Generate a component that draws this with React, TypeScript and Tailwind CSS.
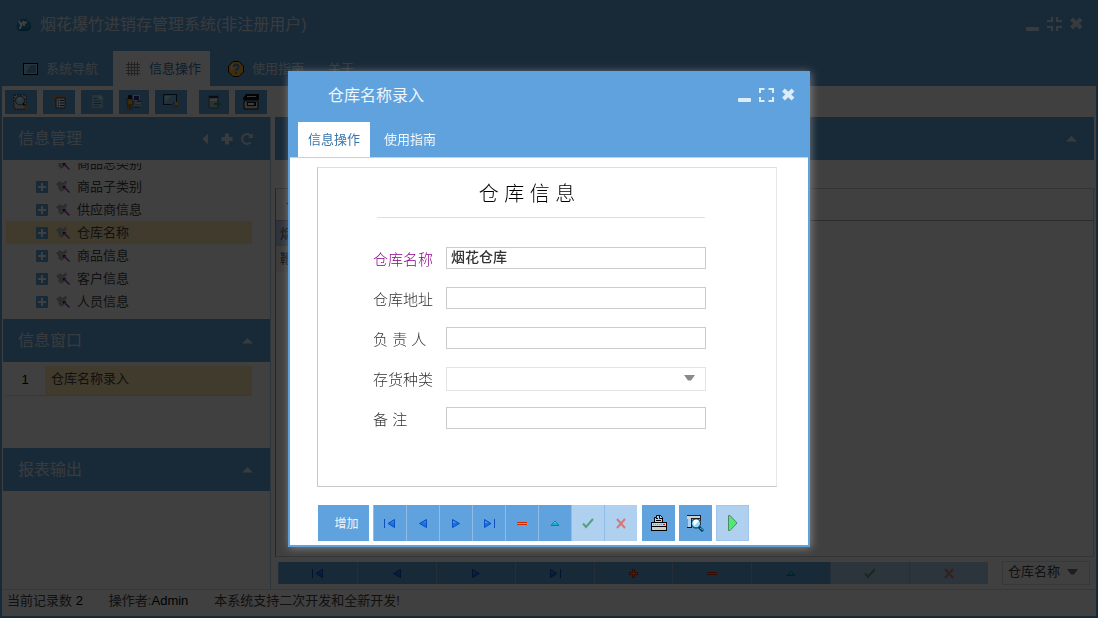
import { useState, type ReactNode } from "react";
import { FaCaretLeft, FaRedoAlt } from "react-icons/fa";

const treeItems = ["商品总类别", "商品子类别", "供应商信息", "仓库名称", "商品信息", "客户信息", "人员信息"];
const gridRows = ["烟花仓库", "鞭炮仓库"];

/* ---------- small glyphs ---------- */

function CaretUp() {
  return (
    <svg width="11" height="6" viewBox="0 0 11 6" fill="currentColor" aria-hidden="true">
      <path d="M5.5 0 11 5.5H0Z" />
    </svg>
  );
}

function CaretDown() {
  return (
    <svg width="11" height="6" viewBox="0 0 11 6" fill="currentColor" aria-hidden="true">
      <path d="M0 0H11L7 5.5H4Z" />
    </svg>
  );
}

function PlusIcon() {
  return (
    <svg width="12" height="12" viewBox="0 0 12 12" fill="currentColor" aria-hidden="true">
      <path d="M4 .5h4V4h3.500v4H8v3.500H4V8H.5V4H4Z" />
    </svg>
  );
}

function MinimizeIcon() {
  return (
    <svg width="15" height="15" viewBox="0 0 15 15" fill="currentColor" aria-hidden="true">
      <rect x="1" y="10" width="13" height="4" rx="1" />
    </svg>
  );
}

function ExpandIcon() {
  return (
    <svg width="15" height="15" viewBox="0 0 15 15" fill="none" stroke="currentColor" strokeWidth="2" aria-hidden="true">
      <path d="M1 5V1H5.500M9.500 1H14V5M14 9V13H9.500M5.500 13H1V9" />
    </svg>
  );
}

function CompressIcon() {
  return (
    <svg width="15" height="15" viewBox="0 0 15 15" fill="none" stroke="currentColor" strokeWidth="2" aria-hidden="true">
      <path d="M0 4H5V0M10 0V4H15M15 10H10V14M5 14V10H0" />
    </svg>
  );
}

function CloseIcon() {
  return (
    <svg width="15" height="15" viewBox="0 0 15 15" fill="none" stroke="currentColor" strokeWidth="4" aria-hidden="true">
      <path d="M2.500 2 12 11M12 2 2.500 11" />
    </svg>
  );
}

/* ---------- application icons ---------- */

function LogoIcon() {
  return (
    <svg width="16" height="14" viewBox="0 0 16 14" aria-hidden="true">
      <path d="M1 8a3 3 0 0 1 2-4 5 5 0 0 1 9-1 4 4 0 0 1 3 4c1 3-1 5-4 5H4C1 12 0 10 1 8Z" fill="#1c86b4" />
      <path d="M2 9c3 3 9 3 13 0-1 3-3 4-5 4H4c-2 0-2-2-2-4Z" fill="#0c6a9c" />
      <path d="m3 3 2 4 3-4M5.500 7l-2 4M8 4.500h3M8 4v4" fill="none" stroke="#fff" strokeWidth="2" />
    </svg>
  );
}

function ScreenIcon() {
  return (
    <svg width="15" height="12" viewBox="0 0 15 12" aria-hidden="true">
      <rect width="15" height="12" fill="#000" />
      <rect x="1" y="1" width="13" height="10" fill="#a9d4ee" />
      <rect x="2" y="2" width="11" height="8" fill="#4c9ad0" />
      <path d="M2 2h6L3 10H2z" fill="#8cc6ea" />
    </svg>
  );
}

function GridIcon() {
  return (
    <svg width="14" height="14" viewBox="0 0 14 14" fill="none" stroke="#8a8a8a" aria-hidden="true">
      <path d="M2.500 0v14M5.500 0v14M8.500 0v14M11.500 0v14M0 2.500h14M0 5.500h14M0 8.500h14M0 11.500h14" />
    </svg>
  );
}

function HelpIcon() {
  return (
    <svg width="16" height="16" viewBox="0 0 16 16" aria-hidden="true">
      <path d="M5 .5h6L15.500 5v6L11 15.500H5L.5 11V5Z" fill="#ffb52e" stroke="#1c1000" />
      <path d="M4 3h5L3 10V5Z" fill="#ffe08a" />
      <path d="M5.500 6c0-3 5-3 5 0 0 2-2.500 2-2.500 4" fill="none" stroke="#4a86c4" strokeWidth="2" />
      <rect x="7" y="11" width="2" height="2" fill="#4a86c4" />
    </svg>
  );
}

function PreviewIcon() {
  return (
    <svg width="16" height="16" viewBox="0 0 16 16" aria-hidden="true">
      <path d="M1 1h12v14H1z" fill="#d5d9d4" stroke="#333" strokeDasharray="2 1" />
      <circle cx="7" cy="6.500" r="4.500" fill="#a4e2f6" stroke="#2d5468" />
      <path d="M5 4h4L5 8z" fill="#e8fbff" />
      <path d="m11 11 3.500 3.500" stroke="#f0823a" strokeWidth="3" />
      <path d="m10 9.500 1.500 1.500" stroke="#111" strokeWidth="2" />
    </svg>
  );
}

function ListIcon() {
  return (
    <svg width="14" height="14" viewBox="0 0 14 14" aria-hidden="true">
      <path d="M0 1h14v2H0z" fill="#b98a7d" />
      <path d="M1 3h3v10H1z" fill="#8b9aa4" />
      <path d="M4 3h9v10H4z" fill="#eef3f6" stroke="#3f4a52" />
      <path d="M6 5.500h1M8 5.500h4M6 8h1M8 8h4M6 10.500h1M8 10.500h4" stroke="#2b3a47" />
    </svg>
  );
}

function PageIcon() {
  return (
    <svg width="13" height="15" viewBox="0 0 13 15" aria-hidden="true">
      <path d="M.5.5h8l4 4v10H.5Z" fill="#9ed0ea" stroke="#6ba5c8" />
      <path d="M8.500.5v4h4Z" fill="#e4f5fd" />
      <path d="M2.500 4.500h4M2.500 7h8M2.500 9.500h8M2.500 12h6" stroke="#3c7da8" />
    </svg>
  );
}

function OperatorIcon() {
  return (
    <svg width="16" height="16" viewBox="0 0 16 16" aria-hidden="true">
      <path d="M7 1h7v6H7z" fill="#d5dfe8" />
      <path d="M8 2h5v4H8z" fill="#2b2f9e" />
      <path d="M9 8h6v2H9zM8 11h7v2H8z" fill="#c3cbd2" />
      <path d="M8 13h6M11 7h4" stroke="#333" />
      <rect x="2" y="1" width="4" height="4" rx="1" fill="#1a1a1a" />
      <path d="M1 5h6v5H6v6H2v-6H1Z" fill="#e6a64a" stroke="#3e2a0c" strokeWidth=".6" />
      <path d="M4 10v5" stroke="#3e2a0c" />
    </svg>
  );
}

function ScreenUserIcon() {
  return (
    <svg width="16" height="15" viewBox="0 0 16 15" aria-hidden="true">
      <rect x=".5" y=".5" width="13" height="10" fill="#79bbe6" stroke="#1b2a36" />
      <path d="M2 2h6L2 8z" fill="#b6e0f7" />
      <circle cx="12" cy="11" r="3.500" fill="#d965b0" />
      <path d="M12 8a3 3 0 0 1 3 3h-3Z" fill="#f2c53c" />
      <path d="M12 11h3a3 3 0 0 1-5 2Z" fill="#49b356" />
      <path d="M9 11a3 3 0 0 1 3-3v3Z" fill="#4b8be0" />
    </svg>
  );
}

function ExportIcon() {
  return (
    <svg width="13" height="14" viewBox="0 0 13 14" aria-hidden="true">
      <path d="M1 1h9v12H1z" fill="#b9c3cb" stroke="#56626b" />
      <path d="M1 1h9v2H1z" fill="#2f3b44" />
      <path d="M2 4h7v2H2z" fill="#eef3f6" />
      <path d="M6 8h3V5.500L13 9l-4 3.500V10H6Z" fill="#2bab3d" />
    </svg>
  );
}

function DeviceIcon() {
  return (
    <svg width="16" height="16" viewBox="0 0 16 16" aria-hidden="true">
      <path d="M3 0h13v6H0V4Z" fill="#111" />
      <path d="M4 2.500h9" stroke="#e8e8e8" />
      <path d="M1 7h14v8H1z" fill="#d8d8d8" stroke="#111" />
      <path d="M4 8h9v4H4z" fill="#111" />
      <path d="M5 10h6" stroke="#f2f2f2" strokeWidth="2" />
    </svg>
  );
}

function ToolIcon() {
  return (
    <svg width="14" height="14" viewBox="0 0 14 14" aria-hidden="true">
      <path d="m0 4 4-3 3 2 3-3 1 3-2 3 2 1-3 3-3 2-3-3 1-2Z" fill="#bcbcbc" />
      <path d="m1 5 3-3M3 9l3-3M7 4l3-3M2 7l4-4M5 11l2-2" stroke="#888" strokeDasharray="1 1" />
      <path d="m7 6 3 0-3 3Z" fill="#2c0c3c" />
      <path d="m8 7 5.500 5.500" stroke="#9a2fc4" strokeWidth="1.500" />
    </svg>
  );
}

function ExpandBox() {
  return (
    <svg width="12" height="12" viewBox="0 0 12 12" aria-hidden="true">
      <rect width="12" height="12" rx="1" fill="#5fa2dd" />
      <path d="M6 2v8M2 6h8" stroke="#fff" strokeWidth="2" />
    </svg>
  );
}

function PrinterIcon() {
  return (
    <svg width="16" height="16" viewBox="0 0 16 16" aria-hidden="true">
      <path d="M3.500 8V2.500h2V.5h4l2 2V8" fill="#a9d3f3" stroke="#000" />
      <path d="M8.500.5v3h3M5 3.500h2M5 5.500h5" fill="none" stroke="#000" />
      <rect x=".5" y="7.500" width="15" height="4" fill="#b9d3ee" stroke="#000" />
      <path d="M2 9.500h10" stroke="#7796ba" strokeDasharray="1 1" />
      <rect x="12" y="9" width="2" height="1" fill="#e01010" />
      <rect x=".5" y="11.500" width="15" height="4" fill="#cfcfc8" stroke="#000" />
    </svg>
  );
}

function SearchPageIcon() {
  return (
    <svg width="17" height="17" viewBox="0 0 17 17" aria-hidden="true">
      <path d="M0 1h14v3H0z" fill="#c7d2da" />
      <path d="M0 .5h14M4 3.500h10M4.500 3v9M13.500 1v5" stroke="#222" />
      <path d="M1 4h3v8H1z" fill="#a9d3f3" />
      <path d="M0 12.500h5" stroke="#111" />
      <circle cx="9" cy="8.500" r="4.500" fill="#8edcff" stroke="#101820" />
      <path d="M6 7c1-3 4-3 6-1l-5 5Z" fill="#f4fdff" />
      <path d="m12 12 4 4" stroke="#0a3550" strokeWidth="3" />
      <path d="m13 13 3 2" stroke="#35c3ee" strokeWidth="1" />
    </svg>
  );
}

function RunIcon() {
  return (
    <svg width="11" height="16" viewBox="0 0 11 16" aria-hidden="true">
      <path d="M1.500.5H3l7 7.500-7 7.500H1.500Z" fill="#52e873" stroke="#4a8a66" />
    </svg>
  );
}

type NavKind = "first" | "prev" | "next" | "last" | "plus" | "minus" | "edit" | "post" | "cancel";

const navLabels: Record<NavKind, string> = {
  first: "首记录",
  prev: "上一条",
  next: "下一条",
  last: "尾记录",
  plus: "增加",
  minus: "删除",
  edit: "编辑",
  post: "保存",
  cancel: "取消",
};

const navGlyphs: Record<NavKind, ReactNode> = {
  first: (
    <>
      <path d="M0 2h1v9H0z" fill="#0a4fc4" />
      <path d="M10.500 2.500v8L4 6.500Z" fill="#1673e6" stroke="#0a4fc4" />
      <path d="m7 6 3-2v1Z" fill="#4fa4fa" />
    </>
  ),
  prev: (
    <>
      <path d="M9.500 2.500v8l-7-4Z" fill="#1673e6" stroke="#0a4fc4" />
      <path d="m6 6 3-2v1Z" fill="#4fa4fa" />
    </>
  ),
  next: (
    <>
      <path d="M2.500 2.500v8l7-4Z" fill="#1673e6" stroke="#0a4fc4" />
      <path d="M3 4v2l3-.5Z" fill="#4fa4fa" />
    </>
  ),
  last: (
    <>
      <path d="M1.500 2.500v8L8 6.500Z" fill="#1673e6" stroke="#0a4fc4" />
      <path d="M2 4v2l3-.5Z" fill="#4fa4fa" />
      <path d="M11 2h1v9h-1z" fill="#0a4fc4" />
    </>
  ),
  plus: (
    <>
      <path d="M5 2h3v3h3v3H8v3H5V8H2V5h3Z" fill="#d42a00" />
      <path d="M6 3h1v7H6zM3 6h7v1H3z" fill="#ff8a30" />
    </>
  ),
  minus: (
    <>
      <path d="M1 5h10v3H1z" fill="#d42a00" />
      <path d="M1 6h10v1H1z" fill="#ff8a30" />
    </>
  ),
  edit: (
    <>
      <path d="M6 4 10 8.500H2Z" fill="#18b2cc" stroke="#07839c" />
      <path d="m6 5 1 1H5Z" fill="#9af0ff" />
    </>
  ),
  post: <path d="m1 6.500 3 3.500 7-8" fill="none" stroke="#55a083" strokeWidth="2" />,
  cancel: <path d="m2 2 8 9M10 2l-8 9" fill="none" stroke="#d4777a" strokeWidth="2" />,
};

function NavButton({ kind, className }: { kind: NavKind; className: string }) {
  const disabled = kind === "post" || kind === "cancel";
  return (
    <button
      type="button"
      aria-label={navLabels[kind]}
      disabled={disabled}
      className={`flex items-center justify-center border-l border-[#8fbde7] bg-[#5fa2dd] disabled:bg-[#afd0ee] ${className}`}
    >
      <svg width="12" height="12" viewBox="0 0 12 12" aria-hidden="true">
        {navGlyphs[kind]}
      </svg>
    </button>
  );
}

function ToolButton({ label, className = "w-8", children }: { label: string; className?: string; children: ReactNode }) {
  return (
    <button type="button" aria-label={label} className={`flex h-6 items-center justify-center bg-[#5fa2dd] ${className}`}>
      {children}
    </button>
  );
}

function PanelHeader({ title, children }: { title?: string; children: ReactNode }) {
  return (
    <div className="flex h-[43px] shrink-0 items-center justify-between bg-[#5fa2dd] pt-px pr-[17px] pl-[15px] text-white/80">
      <h2 className="text-base">{title}</h2>
      {children}
    </div>
  );
}

/* ---------- main window ---------- */

function MainWindow() {
  return (
    <div className="flex min-h-screen flex-col border-2 border-[#5fa2dd] bg-white text-[13px] text-[#444]">
      <header className="bg-[#5fa2dd] text-white/80">
        <div className="flex h-[49px] items-center justify-between pr-3 pb-1 pl-[14px]">
          <div className="flex items-center gap-2">
            <LogoIcon />
            <h1 className="text-base">烟花爆竹进销存管理系统(非注册用户)</h1>
          </div>
          <div className="flex gap-[7px]">
            <button type="button" aria-label="最小化"><MinimizeIcon /></button>
            <button type="button" aria-label="还原"><CompressIcon /></button>
            <button type="button" aria-label="关闭"><CloseIcon /></button>
          </div>
        </div>
        <nav className="flex h-[35px]">
          <a href="#nav" className="flex items-center gap-2 pr-[15px] pl-[21px]"><ScreenIcon />系统导航</a>
          <a href="#info" className="flex items-center gap-[9px] bg-white pr-[9px] pl-[13px] text-[#3a76ac]"><GridIcon />信息操作</a>
          <a href="#guide" className="flex items-center gap-2 px-[18px]"><HelpIcon />使用指南</a>
          <a href="#about" className="flex items-center px-[6px]">关于</a>
        </nav>
      </header>

      <div className="flex h-[31px] items-center gap-[6px] px-[3px]">
        <ToolButton label="查询"><PreviewIcon /></ToolButton>
        <ToolButton label="列表"><ListIcon /></ToolButton>
        <ToolButton label="文档"><PageIcon /></ToolButton>
        <ToolButton label="操作员" className="w-[30px]"><OperatorIcon /></ToolButton>
        <ToolButton label="界面"><ScreenUserIcon /></ToolButton>
        <ToolButton label="导出" className="ml-[6px] w-[30px]"><ExportIcon /></ToolButton>
        <ToolButton label="设备"><DeviceIcon /></ToolButton>
      </div>

      <div className="flex flex-1 gap-1 pr-[2px] pl-px">
        <aside className="flex w-[268px] flex-col border-r border-[#b5d3ee]">
          <PanelHeader title="信息管理">
            <div className="flex items-center gap-2">
              <button type="button" aria-label="折叠"><FaCaretLeft size={16} /></button>
              <button type="button" aria-label="添加"><PlusIcon /></button>
              <button type="button" aria-label="刷新"><FaRedoAlt size={12} /></button>
            </div>
          </PanelHeader>
          <div className="mt-[3px] mb-[6px] flex h-[150px] flex-col justify-end overflow-hidden">
            <ul className="shrink-0 pr-[18px] pl-[3px]">
              {treeItems.map((item, i) => (
                <li
                  key={item}
                  className={`flex h-[23px] items-center pl-[30px] ${item === "仓库名称" ? "bg-[#ffe9b0]" : ""}`}
                >
                  <span className="w-5">{i > 0 && <ExpandBox />}</span>
                  <span className="w-[21px]"><ToolIcon /></span>
                  {item}
                </li>
              ))}
            </ul>
          </div>
          <PanelHeader title="信息窗口"><CaretUp /></PanelHeader>
          <div className="h-[86px] pt-1 pr-[18px] pl-[2px]">
            <div className="flex h-[30px] border-b border-[#eee0c0]">
              <span className="w-10 pt-1 text-center text-black">1</span>
              <span className="flex-1 bg-[#ffe9b0] px-[6px] pt-[3px]">仓库名称录入</span>
            </div>
          </div>
          <PanelHeader title="报表输出"><CaretUp /></PanelHeader>
        </aside>

        <main className="flex min-w-0 flex-1 flex-col">
          <PanelHeader><CaretUp /></PanelHeader>
          <div className="mt-7 flex-1 border border-[#c8cdd4] border-l-[#999]">
            <table className="w-full text-left">
              <thead>
                <tr className="h-[31px] border-b border-[#aaa]"><th className="pl-[10px] font-normal">仓库名称</th></tr>
              </thead>
              <tbody>
                {gridRows.map((row, i) => (
                  <tr key={row} className="h-[26px]">
                    <td className={`w-[340px] pl-1 ${i === 0 ? "bg-[#b9ccf0]" : "bg-[#f0f0f0]"}`}>{row}</td>
                    <td />
                  </tr>
                ))}
              </tbody>
            </table>
          </div>
          <div className="flex items-center py-1 pr-1 pl-[3px]">
            <div className="grid h-[22px] flex-1 grid-cols-9">
              {(Object.keys(navLabels) as NavKind[]).map((kind) => (
                <NavButton key={kind} kind={kind} className="h-full" />
              ))}
            </div>
            <div className="relative ml-[14px] w-[88px]">
              <select aria-label="排序字段" className="h-6 w-full appearance-none border border-[#ddd] bg-white pr-7 pb-[2px] pl-[5px]">
                <option>仓库名称</option>
              </select>
              <span className="pointer-events-none absolute top-2 right-3 text-[#777]"><CaretDown /></span>
            </div>
          </div>
        </main>
      </div>

      <footer className="flex h-[27px] items-center gap-[26px] border-t border-[#ddd] px-[5px] pb-1">
        <span>当前记录数 <span className="text-black">2</span></span>
        <span>操作者:<span className="text-black">Admin</span></span>
        <span>本系统支持二次开发和全新开发!</span>
      </footer>
    </div>
  );
}

/* ---------- entry dialog ---------- */

const fieldClass = "w-[260px] border bg-white px-1 text-sm font-medium text-[#333] outline-none";

function Field({ id, label, required, children }: { id: string; label: string; required?: boolean; children: ReactNode }) {
  return (
    <div className="flex h-10 items-start">
      <label htmlFor={id} className={`w-[73px] text-[15px] leading-[26px] font-light ${required ? "text-[#8b008b]" : "text-[#333]"}`}>
        {label}
      </label>
      {children}
    </div>
  );
}

function EntryDialog() {
  const [form, setForm] = useState({ name: "烟花仓库", address: "", manager: "", kind: "", remark: "" });

  const update = (key: keyof typeof form) => (e: React.ChangeEvent<HTMLInputElement | HTMLSelectElement>) =>
    setForm({ ...form, [key]: e.target.value });

  const navButtons: NavKind[] = ["first", "prev", "next", "last", "minus", "edit", "post", "cancel"];

  return (
    <div
      role="dialog"
      aria-label="仓库名称录入"
      className="w-[522px] border-2 border-[#5fa2dd] bg-white shadow-[1px_1px_8px_rgba(200,200,200,0.5)]"
    >
      <header className="border-b border-[#b5d5f0] bg-[#5fa2dd] text-white/90">
        <div className="flex h-[49px] items-center justify-between pr-3 pb-1 pl-[38px]">
          <h2 className="text-base">仓库名称录入</h2>
          <div className="flex gap-[7px] text-white/80">
            <button type="button" aria-label="最小化"><MinimizeIcon /></button>
            <button type="button" aria-label="最大化"><ExpandIcon /></button>
            <button type="button" aria-label="关闭"><CloseIcon /></button>
          </div>
        </div>
        <nav className="flex h-[35px] gap-1 px-2 text-[13px]">
          <a href="#entry" className="flex items-center bg-white px-[10px] text-[#3a76ac]">信息操作</a>
          <a href="#help" className="flex items-center px-[10px]">使用指南</a>
        </nav>
      </header>

      <form className="px-[27px] pt-[9px] pb-1">
        <div className="mr-1 h-[320px] border border-[#c8c8c8] border-t-[#ddd] border-r-[#e8e8e8] px-[55px]">
          <h3 className="mr-4 ml-1 h-[50px] border-b border-[#cfe1f3] pt-3 pr-[28px] text-center text-xl font-light text-black">
            仓 库 信 息
          </h3>
          <div className="pt-[29px]">
            <Field id="name" label="仓库名称" required>
              <input id="name" value={form.name} onChange={update("name")} className={`${fieldClass} h-[22px] border-[#ccc] pb-1`} />
            </Field>
            <Field id="address" label="仓库地址">
              <input id="address" value={form.address} onChange={update("address")} className={`${fieldClass} h-[22px] border-[#ccc]`} />
            </Field>
            <Field id="manager" label="负 责 人">
              <input id="manager" value={form.manager} onChange={update("manager")} className={`${fieldClass} h-[22px] border-[#ccc]`} />
            </Field>
            <Field id="kind" label="存货种类">
              <div className="relative">
                <select id="kind" value={form.kind} onChange={update("kind")} className={`${fieldClass} h-6 appearance-none border-[#e4e4e4]`}>
                  <option value=""></option>
                </select>
                <span className="pointer-events-none absolute top-2 right-[11px] text-[#8a8a8a]"><CaretDown /></span>
              </div>
            </Field>
            <Field id="remark" label="备 注">
              <input id="remark" value={form.remark} onChange={update("remark")} className={`${fieldClass} h-[22px] border-[#ccc]`} />
            </Field>
          </div>
        </div>

        <div className="mt-[18px] ml-px flex h-9 gap-1">
          <button type="button" className="w-[51px] bg-[#5fa2dd] pt-[2px] pl-[6px] text-xs text-white/90">增加</button>
          <div className="mr-px flex">
            {navButtons.map((kind) => (
              <NavButton key={kind} kind={kind} className="w-[33px]" />
            ))}
          </div>
          <button type="button" aria-label="打印" className="flex w-[33px] items-center justify-center bg-[#5fa2dd]"><PrinterIcon /></button>
          <button type="button" aria-label="打印预览" className="flex w-[33px] items-center justify-center bg-[#5fa2dd]"><SearchPageIcon /></button>
          <button type="button" aria-label="运行" className="flex w-[33px] items-center justify-center border border-[#9fc5eb] bg-[#afd0ee]"><RunIcon /></button>
        </div>
      </form>
    </div>
  );
}

export default function App() {
  return (
    <div className="font-['Liberation_Sans','Noto_Sans_CJK_SC',sans-serif]">
      <MainWindow />
      {/* Modal backdrop */}
      <div className="fixed inset-0 flex items-center justify-center bg-black/75">
        <EntryDialog />
      </div>
    </div>
  );
}
